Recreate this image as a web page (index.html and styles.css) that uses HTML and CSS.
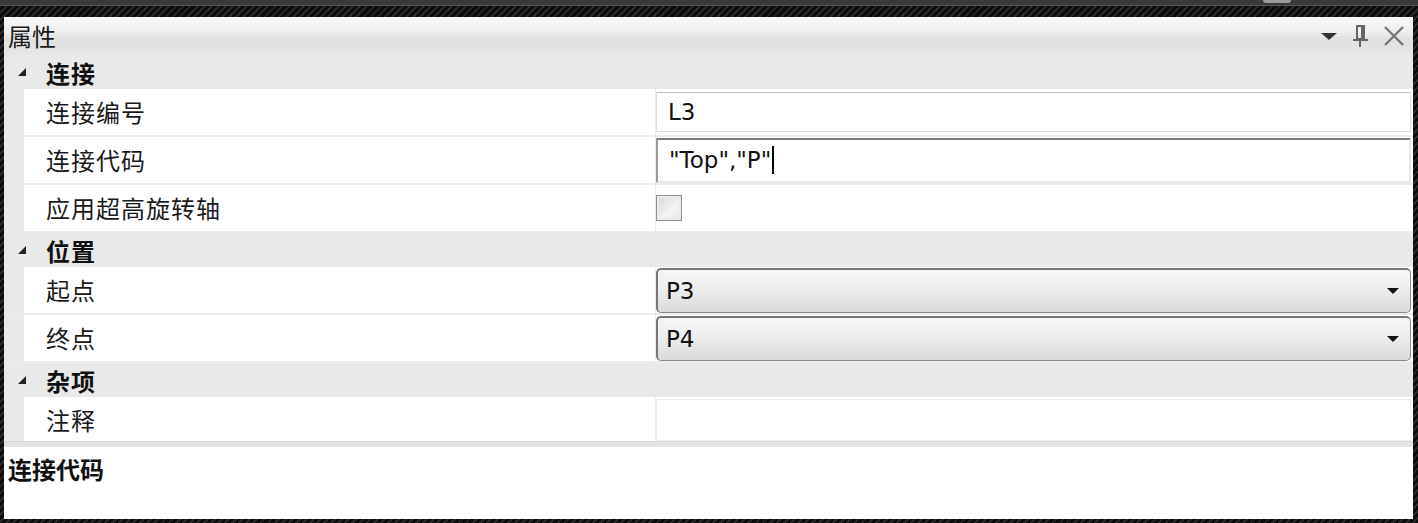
FILE: index.html
```html
<!DOCTYPE html>
<html lang="zh-CN">
<head>
  <meta charset="UTF-8">
  <title>属性</title>
  <link rel="stylesheet" href="styles.css">
</head>
<body>
  <div class="top-strip">
    <div class="top-band"><span class="top-tab"></span></div>
  </div>

  <div class="panel">
    <div class="title-bar">
      <span class="title-text">属性</span>
      <div class="title-icons">
        <svg width="18" height="12" viewBox="0 0 18 12"><polygon points="1,3 17,3 9,10" fill="#333"/></svg>
        <svg width="20" height="24" viewBox="0 0 20 24">
          <rect x="7" y="2" width="7" height="13" fill="none" stroke="#666" stroke-width="2"/>
          <rect x="11" y="2" width="3" height="13" fill="#666"/>
          <line x1="3" y1="16" x2="18" y2="16" stroke="#666" stroke-width="2"/>
          <line x1="10" y1="16" x2="10" y2="23" stroke="#666" stroke-width="2"/>
        </svg>
        <svg width="24" height="22" viewBox="0 0 24 22">
          <path d="M3 2 L21 20 M21 2 L3 20" stroke="#777" stroke-width="2.4" fill="none"/>
        </svg>
      </div>
    </div>

    <div class="grid">
      <div class="group">
        <svg class="caret" width="10" height="10" viewBox="0 0 10 10"><polygon points="9,1 9,9 1,9" fill="#222"/></svg>
        <span class="group-name">连接</span>
      </div>
      <div class="row">
        <div class="indent"></div>
        <div class="label">连接编号</div>
        <div class="value"><div class="textbox">L3</div></div>
      </div>
      <div class="row">
        <div class="indent"></div>
        <div class="label">连接代码</div>
        <div class="value"><div class="textbox focused">"Top","P"<span class="caret-line"></span></div></div>
      </div>
      <div class="row">
        <div class="indent"></div>
        <div class="label">应用超高旋转轴</div>
        <div class="value"><span class="checkbox"></span></div>
      </div>

      <div class="group">
        <svg class="caret" width="10" height="10" viewBox="0 0 10 10"><polygon points="9,1 9,9 1,9" fill="#222"/></svg>
        <span class="group-name">位置</span>
      </div>
      <div class="row">
        <div class="indent"></div>
        <div class="label">起点</div>
        <div class="value">
          <div class="combo">P3<svg class="combo-arrow" width="14" height="8" viewBox="0 0 14 8"><polygon points="1,1 13,1 7,7" fill="#111"/></svg></div>
        </div>
      </div>
      <div class="row">
        <div class="indent"></div>
        <div class="label">终点</div>
        <div class="value">
          <div class="combo">P4<svg class="combo-arrow" width="14" height="8" viewBox="0 0 14 8"><polygon points="1,1 13,1 7,7" fill="#111"/></svg></div>
        </div>
      </div>

      <div class="group">
        <svg class="caret" width="10" height="10" viewBox="0 0 10 10"><polygon points="9,1 9,9 1,9" fill="#222"/></svg>
        <span class="group-name">杂项</span>
      </div>
      <div class="row last">
        <div class="indent"></div>
        <div class="label">注释</div>
        <div class="value"><div class="textbox plain"></div></div>
      </div>
    </div>

    <div class="splitter"></div>

    <div class="desc">
      <div class="desc-title">连接代码</div>
    </div>
  </div>
</body>
</html>
```

FILE: styles.css
```css
body {
  margin: 0;
  width: 1418px;
  height: 523px;
  overflow: hidden;
  background-color: #111;
  background-image: repeating-linear-gradient(135deg, #0c0c0c 0, #0c0c0c 3px, #2a2a2a 3px, #2a2a2a 5px);
  font-family: "Noto Sans CJK SC", "DejaVu Sans", sans-serif;
  color: #111;
}

.top-strip {
  height: 17px;
}

.top-band {
  height: 5px;
  background: #3a3a3a;
  border-bottom: 1px solid #555;
  position: relative;
}

.top-tab {
  position: absolute;
  left: 1263px;
  top: 0;
  width: 28px;
  height: 3px;
  background: #9a9a9a;
  border-radius: 0 0 4px 4px;
}

.panel {
  margin: 0 5px 0 4px;
  height: 502px;
  background: #fff;
  display: flex;
  flex-direction: column;
}

.title-bar {
  height: 38px;
  display: flex;
  align-items: center;
  justify-content: space-between;
  background: linear-gradient(to bottom, #f8f8f8 0%, #eeeeee 40%, #e0e0e0 60%, #e6e6e6 100%);
  border-radius: 3px 3px 0 0;
}

.title-text {
  font-size: 24px;
  line-height: 38px;
  padding-left: 4px;
  color: #1a1a1a;
}

.title-icons {
  display: flex;
  align-items: center;
  gap: 12px;
  padding-right: 7px;
}

.grid {
  display: flex;
  flex-direction: column;
  background: #e9e9e9;
}

.group {
  height: 34px;
  display: flex;
  align-items: center;
  background: #e9e9e9;
}

.caret {
  margin-left: 13px;
  margin-right: 19px;
}

.group-name {
  font-size: 24px;
  font-weight: bold;
  letter-spacing: 1px;
}

.row {
  height: 46px;
  display: grid;
  grid-template-columns: 20px 632px 1fr;
  border-bottom: 2px solid #ececec;
  background: #fff;
}

.row.last {
  height: 44px;
  border-bottom: none;
}

.indent {
  background: #e9e9e9;
}

.label {
  font-size: 24px;
  letter-spacing: 1px;
  line-height: 46px;
  padding-left: 22px;
  color: #1a1a1a;
  border-right: 1px solid #ebebeb;
}

.value {
  display: flex;
  align-items: center;
  padding-right: 2px;
}

.textbox {
  flex: 1;
  height: 40px;
  box-sizing: border-box;
  border: 1px solid #dcdcdc;
  border-top-color: #c4c4c4;
  padding-left: 11px;
  font-family: "DejaVu Sans", sans-serif;
  font-size: 23px;
  line-height: 38px;
  display: flex;
  align-items: center;
}

.textbox.focused {
  height: 45px;
  border: 2px solid #e8e8e8;
  border-top-color: #7a7a7a;
  border-left-color: #9a9a9a;
}

.textbox.plain {
  height: 42px;
  border: 1px solid #eeeeee;
}

.caret-line {
  display: inline-block;
  width: 2px;
  height: 28px;
  background: #000;
  margin-left: 1px;
}

.checkbox {
  width: 24px;
  height: 24px;
  border: 1px solid #8f8f8f;
  background: linear-gradient(135deg, #d6d6d6, #f4f4f4 60%, #e4e4e4);
  box-shadow: inset 0 0 0 2px #eaeaea;
}

.combo {
  flex: 1;
  height: 45px;
  box-sizing: border-box;
  border: 1px solid #8a8a8a;
  border-left: 2px solid #777;
  border-top: 2px solid #777;
  border-radius: 5px;
  background: linear-gradient(to bottom, #f6f6f6 0%, #ececec 50%, #dadada 100%);
  display: flex;
  align-items: center;
  justify-content: space-between;
  padding: 0 10px 0 8px;
  font-family: "DejaVu Sans", sans-serif;
  font-size: 23px;
}

.splitter {
  height: 5px;
  background: #e4e4e4;
  border-top: 1px solid #d8d8d8;
}

.desc {
  flex: 1;
  background: #fff;
  padding-left: 4px;
}

.desc-title {
  font-size: 24px;
  font-weight: bold;
  line-height: 40px;
  padding-top: 2px;
}
```
